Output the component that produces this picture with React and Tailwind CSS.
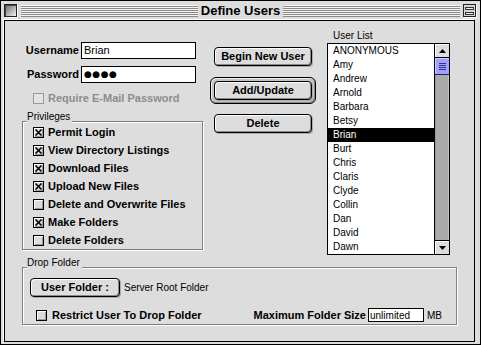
import React from 'react';

const users = [
  'ANONYMOUS', 'Amy', 'Andrew', 'Arnold', 'Barbara', 'Betsy', 'Brian', 'Burt',
  'Chris', 'Claris', 'Clyde', 'Collin', 'Dan', 'David', 'Dawn',
];

const privileges = [
  { label: 'Permit Login', on: true },
  { label: 'View Directory Listings', on: true },
  { label: 'Download Files', on: true },
  { label: 'Upload New Files', on: true },
  { label: 'Delete and Overwrite Files', on: false },
  { label: 'Make Folders', on: true },
  { label: 'Delete Folders', on: false },
];

const CheckBox = ({ checked, disabled }) => (
  <span
    className={
      disabled
        ? 'flex h-[11px] w-[11px] shrink-0 items-center justify-center border border-[#9a9a9a] bg-[#e4e4e4]'
        : 'flex h-[11px] w-[11px] shrink-0 items-center justify-center border border-black bg-[#dcdcdc] shadow-[inset_1px_1px_0_#fff,inset_-1px_-1px_0_#9a9a9a]'
    }
  >
    {checked && (
      <svg width="9" height="9" viewBox="0 0 9 9">
        <path d="M1.5 1.5 L7.5 7.5 M7.5 1.5 L1.5 7.5" stroke="#000" strokeWidth="1.6" />
      </svg>
    )}
  </span>
);

const MacButton = ({ children, className = '' }) => (
  <div
    className={`flex h-[19px] items-center justify-center rounded-[4px] border border-black bg-[#dddddd] text-[11px] font-bold shadow-[inset_1px_1px_0_#fff,inset_-1px_-1px_0_#8a8a8a,1px_1px_0_#aaa] ${className}`}
  >
    {children}
  </div>
);

const Stripes = () => (
  <div className="h-[12px] flex-1 bg-[image:repeating-linear-gradient(to_bottom,#f4f4f4_0px,#f4f4f4_1px,#8a8a8a_1px,#8a8a8a_2px)]" />
);

const GroupBox = ({ title, className = '', children }) => (
  <div
    className={`relative border border-[#808080] shadow-[1px_1px_0_#fff,inset_1px_1px_0_#fff] ${className}`}
  >
    <span className="absolute -top-[11px] left-[4px] bg-[#dddddd] pr-[2px] text-[10px] leading-[12px]">
      {title}
    </span>
    {children}
  </div>
);

export default function App() {
  return (
    <div className="flex h-[345px] w-[481px] flex-col border border-black bg-[#dddddd] font-['Liberation_Sans',Arial,sans-serif] text-black">
      {/* title bar */}
      <div className="flex h-[19px] items-center pl-[3px] pr-[4px]">
        <div className="h-[13px] w-[13px] border border-[#222] bg-[linear-gradient(135deg,#666,#f2f2f2)] shadow-[1px_1px_0_#fff,inset_1px_1px_0_#444]" />
        <div className="ml-[4px] flex flex-1 items-center">
          <Stripes />
          <div className="px-[3px] text-[13px] font-bold leading-[14px]">Define Users</div>
          <Stripes />
        </div>
        <div className="ml-[3px] flex h-[13px] w-[13px] flex-col justify-center gap-[2px] border border-[#222] bg-[#d6d6d6] px-[1px] shadow-[1px_1px_0_#fff]">
          <div className="h-[3px] border border-[#333] bg-[#eee]" />
          <div className="h-[3px] border border-[#333] bg-[#eee]" />
        </div>
      </div>

      {/* content */}
      <div className="mb-[2px] ml-[3px] mr-[5px] flex-1 border border-black bg-[#dddddd] shadow-[-1px_-1px_0_#fff]">
        <div className="flex pl-[17px]">
          {/* left column */}
          <div className="w-[181px] pt-[21px]">
            <div className="flex h-[17px] items-center">
              <div className="w-[59px] pr-[2px] text-right text-[11px] font-bold">Username</div>
              <div className="flex h-[17px] w-[115px] items-center border border-black bg-white pl-[2px] text-[11px]">
                Brian
              </div>
            </div>
            <div className="mt-[7px] flex h-[17px] items-center">
              <div className="w-[59px] pr-[2px] text-right text-[11px] font-bold">Password</div>
              <div className="flex h-[17px] w-[115px] items-center border border-black bg-white pl-[2px] font-['DejaVu_Sans',sans-serif] text-[9px] leading-none tracking-[0.5px]">
                ●●●●
              </div>
            </div>
            <div className="mt-[10px] flex h-[11px] items-center gap-[4px] pl-[11px]">
              <CheckBox disabled />
              <span className="text-[11px] font-bold text-[#8c8c8c]">Require E-Mail Password</span>
            </div>

            <GroupBox title="Privileges" className="mt-[17px] w-[181px]">
              <div className="flex flex-col gap-[7px] pb-[3px] pl-[10px] pt-[5px]">
                {privileges.map((p) => (
                  <div key={p.label} className="flex h-[11px] items-center gap-[4px]">
                    <CheckBox checked={p.on} />
                    <span className="text-[11px] font-bold">{p.label}</span>
                  </div>
                ))}
              </div>
            </GroupBox>
          </div>

          {/* buttons */}
          <div className="ml-[7px] w-[106px] pt-[26px]">
            <div className="px-[4px]">
              <MacButton>Begin New User</MacButton>
            </div>
            <div className="mt-[11px] rounded-[6px] border border-black bg-[#c4c4c4] p-[3px] shadow-[inset_1px_1px_0_#eee,inset_-1px_-1px_0_#888]">
              <MacButton>Add/Update</MacButton>
            </div>
            <div className="mt-[10px] px-[4px]">
              <MacButton>Delete</MacButton>
            </div>
          </div>

          {/* user list */}
          <div className="ml-[11px] pt-[9px]">
            <div className="h-[13px] pl-[6px] text-[10px] leading-[12px]">User List</div>
            <div className="flex h-[212px] w-[123px] border border-black bg-white">
              <div className="w-[106px]">
                {users.map((u) => (
                  <div
                    key={u}
                    className={
                      u === 'Brian'
                        ? 'h-[14px] bg-black pl-[5px] text-[10px] leading-[14px] text-white'
                        : 'h-[14px] pl-[5px] text-[10px] leading-[14px]'
                    }
                  >
                    {u}
                  </div>
                ))}
              </div>
              <div className="flex w-[15px] flex-col border-l border-black bg-[#aaaaaa]">
                <div className="flex h-[14px] items-center justify-center border-b border-black bg-[#dddddd] shadow-[inset_1px_1px_0_#fff]">
                  <svg width="7" height="4" viewBox="0 0 7 4">
                    <path d="M3.5 0 L7 4 L0 4 Z" fill="#000" />
                  </svg>
                </div>
                <div className="flex h-[17px] flex-col items-center justify-center gap-[1px] border-b border-[#222255] bg-[#a0a0ff] shadow-[inset_1px_1px_0_#d0d0ff]">
                  <div className="h-[1px] w-[7px] bg-[#333380]" />
                  <div className="h-[1px] w-[7px] bg-[#333380]" />
                  <div className="h-[1px] w-[7px] bg-[#333380]" />
                  <div className="h-[1px] w-[7px] bg-[#333380]" />
                </div>
                <div className="flex-1 shadow-[inset_1px_0_0_#999,inset_-1px_0_0_#c4c4c4]" />
                <div className="flex h-[14px] items-center justify-center border-t border-black bg-[#dddddd] shadow-[inset_1px_1px_0_#fff]">
                  <svg width="7" height="4" viewBox="0 0 7 4">
                    <path d="M0 0 L7 0 L3.5 4 Z" fill="#000" />
                  </svg>
                </div>
              </div>
            </div>
          </div>
        </div>

        {/* drop folder */}
        <GroupBox title="Drop Folder" className="ml-[17px] mt-[12px] w-[435px]">
          <div className="pb-[2px] pl-[7px] pt-[10px]">
            <div className="flex items-center">
              <MacButton className="w-[90px]">User Folder :</MacButton>
              <span className="ml-[4px] text-[10px]">Server Root Folder</span>
            </div>
            <div className="mt-[11px] flex h-[14px] items-center">
              <div className="ml-[6px] flex items-center gap-[5px]">
                <CheckBox />
                <span className="text-[11px] font-bold">Restrict User To Drop Folder</span>
              </div>
              <div className="ml-auto mr-[14px] flex items-center">
                <span className="mr-[2px] text-[11px] font-bold">Maximum Folder Size</span>
                <div className="flex h-[14px] w-[56px] items-center border border-black bg-white pl-[1px] text-[10px]">
                  unlimited
                </div>
                <span className="ml-[3px] text-[10px]">MB</span>
              </div>
            </div>
          </div>
        </GroupBox>
      </div>
    </div>
  );
}
